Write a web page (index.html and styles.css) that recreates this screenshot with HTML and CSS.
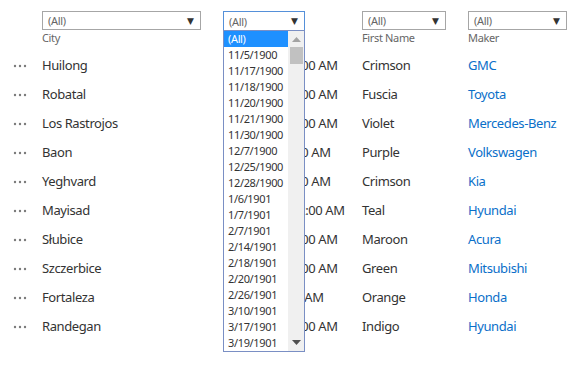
FILE: index.html
```html
<!DOCTYPE html>
<html>
<head>
<meta charset="utf-8">
<link rel="stylesheet" href="styles.css">
</head>
<body>
<div class="grid">
  <div class="head"></div>
  <div class="head"><div class="sel w-city"><span>(All)</span><span class="arr">▼</span></div><div class="lbl">City</div></div>
  <div class="head date-head">
    <div class="sel sel-open w-date"><span>(All)</span><span class="arr">▼</span></div>
    <div class="list">
      <div class="items">
        <div class="it on">(All)</div>
        <div class="it">11/5/1900</div>
        <div class="it">11/17/1900</div>
        <div class="it">11/18/1900</div>
        <div class="it">11/20/1900</div>
        <div class="it">11/21/1900</div>
        <div class="it">11/30/1900</div>
        <div class="it">12/7/1900</div>
        <div class="it">12/25/1900</div>
        <div class="it">12/28/1900</div>
        <div class="it">1/6/1901</div>
        <div class="it">1/7/1901</div>
        <div class="it">2/7/1901</div>
        <div class="it">2/14/1901</div>
        <div class="it">2/18/1901</div>
        <div class="it">2/20/1901</div>
        <div class="it">2/26/1901</div>
        <div class="it">3/10/1901</div>
        <div class="it">3/17/1901</div>
        <div class="it">3/19/1901</div>
      </div>
      <div class="sb">
        <svg class="up" width="9" height="5" viewBox="0 0 9 5"><path d="M0 5 L4.5 0 L9 5 Z" fill="#a3a3a3"/></svg>
        <div class="thumb"></div>
        <div class="sp"></div>
        <svg class="dn" width="9" height="5" viewBox="0 0 9 5"><path d="M0 0 L4.5 5 L9 0 Z" fill="#505050"/></svg>
      </div>
    </div>
  </div>
  <div class="head"><div class="sel w-first"><span>(All)</span><span class="arr">▼</span></div><div class="lbl">First Name</div></div>
  <div class="head"><div class="sel w-maker"><span>(All)</span><span class="arr">▼</span></div><div class="lbl">Maker</div></div>

  <div class="dots"><svg width="14" height="4" viewBox="0 0 14 4"><circle cx="2" cy="2" r="1.2"/><circle cx="7" cy="2" r="1.2"/><circle cx="12" cy="2" r="1.2"/></svg></div>
  <div class="c">Huilong</div><div class="c">11/5/1900 12:00 AM</div><div class="c">Crimson</div><div class="c link">GMC</div>

  <div class="dots"><svg width="14" height="4" viewBox="0 0 14 4"><circle cx="2" cy="2" r="1.2"/><circle cx="7" cy="2" r="1.2"/><circle cx="12" cy="2" r="1.2"/></svg></div>
  <div class="c">Robatal</div><div class="c">11/7/1900 12:00 AM</div><div class="c">Fuscia</div><div class="c link">Toyota</div>

  <div class="dots"><svg width="14" height="4" viewBox="0 0 14 4"><circle cx="2" cy="2" r="1.2"/><circle cx="7" cy="2" r="1.2"/><circle cx="12" cy="2" r="1.2"/></svg></div>
  <div class="c">Los Rastrojos</div><div class="c">11/8/1900 12:00 AM</div><div class="c">Violet</div><div class="c link">Mercedes-Benz</div>

  <div class="dots"><svg width="14" height="4" viewBox="0 0 14 4"><circle cx="2" cy="2" r="1.2"/><circle cx="7" cy="2" r="1.2"/><circle cx="12" cy="2" r="1.2"/></svg></div>
  <div class="c">Baon</div><div class="c">12/7/1900 1:00 AM</div><div class="c">Purple</div><div class="c link">Volkswagen</div>

  <div class="dots"><svg width="14" height="4" viewBox="0 0 14 4"><circle cx="2" cy="2" r="1.2"/><circle cx="7" cy="2" r="1.2"/><circle cx="12" cy="2" r="1.2"/></svg></div>
  <div class="c">Yeghvard</div><div class="c">1/16/1901 1:00 AM</div><div class="c">Crimson</div><div class="c link">Kia</div>

  <div class="dots"><svg width="14" height="4" viewBox="0 0 14 4"><circle cx="2" cy="2" r="1.2"/><circle cx="7" cy="2" r="1.2"/><circle cx="12" cy="2" r="1.2"/></svg></div>
  <div class="c">Mayisad</div><div class="c">12/25/1900 12:00 AM</div><div class="c">Teal</div><div class="c link">Hyundai</div>

  <div class="dots"><svg width="14" height="4" viewBox="0 0 14 4"><circle cx="2" cy="2" r="1.2"/><circle cx="7" cy="2" r="1.2"/><circle cx="12" cy="2" r="1.2"/></svg></div>
  <div class="c">Słubice</div><div class="c">2/14/1901 12:00 AM</div><div class="c">Maroon</div><div class="c link">Acura</div>

  <div class="dots"><svg width="14" height="4" viewBox="0 0 14 4"><circle cx="2" cy="2" r="1.2"/><circle cx="7" cy="2" r="1.2"/><circle cx="12" cy="2" r="1.2"/></svg></div>
  <div class="c">Szczerbice</div><div class="c">2/18/1901 12:00 AM</div><div class="c">Green</div><div class="c link">Mitsubishi</div>

  <div class="dots"><svg width="14" height="4" viewBox="0 0 14 4"><circle cx="2" cy="2" r="1.2"/><circle cx="7" cy="2" r="1.2"/><circle cx="12" cy="2" r="1.2"/></svg></div>
  <div class="c">Fortaleza</div><div class="c">2/7/1901 1:00 AM</div><div class="c">Orange</div><div class="c link">Honda</div>

  <div class="dots"><svg width="14" height="4" viewBox="0 0 14 4"><circle cx="2" cy="2" r="1.2"/><circle cx="7" cy="2" r="1.2"/><circle cx="12" cy="2" r="1.2"/></svg></div>
  <div class="c">Randegan</div><div class="c">3/10/1901 12:00 AM</div><div class="c">Indigo</div><div class="c link">Hyundai</div>
</div>
</body>
</html>
```

FILE: styles.css
```css
html, body {
  margin: 0;
  padding: 0;
  background: #fff;
}
body {
  font-family: "Noto Sans", "Open Sans", sans-serif;
  color: #333;
  min-height: 369px;
}
.grid {
  display: grid;
  grid-template-columns: 42px 181px 139px 106px 1fr;
  grid-auto-rows: 29px;
  grid-template-rows: 51px;
}
.head {
  padding-top: 11px;
  position: relative;
}
.sel {
  box-sizing: border-box;
  height: 19px;
  border: 1px solid #a6a6a6;
  display: flex;
  align-items: center;
  justify-content: space-between;
  padding: 0 6px 0 5px;
  font-size: 11px;
  letter-spacing: -0.3px;
  color: #666;
  background: #fff;
}
.sel .arr {
  font-size: 9px;
  color: #333;
  font-family: "DejaVu Sans", sans-serif;
  letter-spacing: 0;
}
.sel-open {
  border-color: #5590d9;
  height: 20px;
}
.w-city { width: 159px; }
.w-date { width: 82px; }
.w-first { width: 84px; }
.w-maker { width: 99px; }
.lbl {
  font-size: 11px;
  letter-spacing: -0.35px;
  color: #666;
  line-height: 16px;
}
.list {
  position: absolute;
  top: 30px;
  left: 0;
  width: 82px;
  height: 322px;
  box-sizing: border-box;
  border: 1px solid #7a8fc4;
  background: #fff;
  display: flex;
  z-index: 2;
}
.items {
  flex: 1;
}
.it {
  height: 16px;
  line-height: 16px;
  font-size: 11px;
  letter-spacing: -0.35px;
  color: #333;
  padding-left: 4px;
  white-space: nowrap;
}
.it.on {
  background: #1e90ff;
  color: #fff;
}
.sb {
  width: 16px;
  background: #f0f0f0;
  display: flex;
  flex-direction: column;
  align-items: center;
}
.sb .up {
  margin-top: 6px;
}
.thumb {
  width: 13px;
  height: 17px;
  background: #c1c1c1;
  margin-top: 5px;
}
.sp { flex: 1; }
.sb .dn {
  margin-bottom: 6px;
}
.dots {
  display: flex;
  align-items: center;
  padding-left: 13px;
  padding-top: 1px;
}
.dots svg circle { fill: #7a7a7a; }
.c {
  font-size: 13px;
  letter-spacing: -0.4px;
  line-height: 28px;
  white-space: nowrap;
  color: #333;
}
.link { color: #0a6fc9; }
```
